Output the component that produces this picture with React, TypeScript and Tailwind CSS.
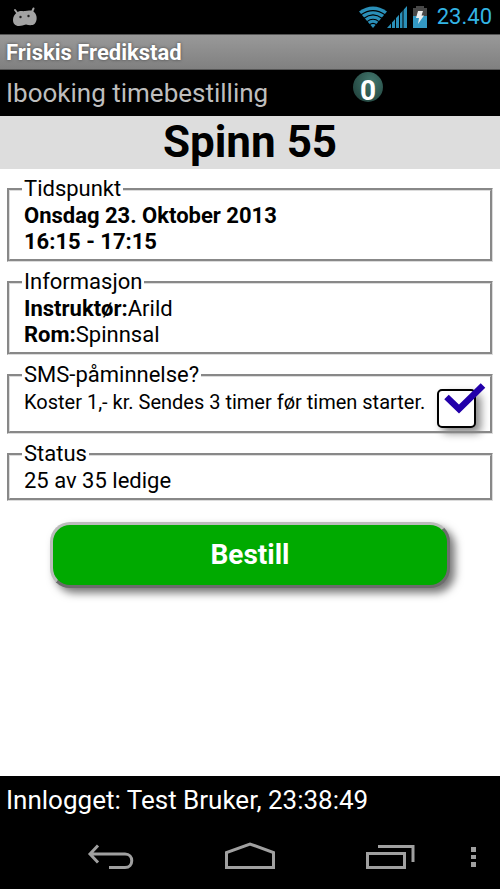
import { ReactNode } from "react";

type PanelProps = {
  title: string;
  children: ReactNode;
};

function Panel({ title, children }: PanelProps) {
  return (
    <fieldset className="min-w-0 border-[3px] border-[#dcdcdc] [border-style:groove] px-3 pt-px pb-1">
      <legend className="px-0.5">{title}</legend>
      <div className="px-0.5">{children}</div>
    </fieldset>
  );
}

function StatusBar() {
  return (
    <div className="flex h-[34px] items-center bg-black px-2">
      <svg className="ml-1 h-5 w-7" viewBox="0 0 28 20" aria-hidden="true">
        <path d="M3 3l3 4M21.500 1.500L19.500 6" stroke="#a3a3a3" strokeWidth="2" strokeLinecap="round" />
        <path
          d="M5 5.500C8 3.200 10 4.500 13 4C16 3.300 20 3 22 5C25.500 8 25.500 14 22.500 17C21 18.500 17 18.500 14 17.500C11 18 10 19 7 19C3 19 1 16.500 1 13C1 10 2.500 7 5 5.500Z"
          fill="#a3a3a3"
        />
        <circle cx="8.500" cy="10" r="1.200" fill="#222" />
        <circle cx="16.500" cy="9" r="1.200" fill="#222" />
      </svg>
      <div className="ml-auto flex items-center text-[#33b5e5]">
        <svg className="h-[22px] w-7" viewBox="0 0 28 22" aria-hidden="true">
          <path d="M0 5.500Q14 -4.500 28 5.500L14 22Z" fill="#2a8fb8" />
          <path d="M2 8.800Q14 .5 26 8.800M5 12.300Q14 5.500 23 12.300M8 15.600Q14 11 20 15.600M10.500 18.800Q14 16 17.500 18.800" fill="none" stroke="#000" strokeWidth="1.100" />
        </svg>
        <svg className="h-[22px] w-5" viewBox="0 0 20 22" aria-hidden="true">
          <path d="M0 22L20 0V22Z" fill="#2a8fb8" />
          <path d="M4.500 22V10M8.500 22V8M12.500 22V5M16 22V0" stroke="#000" strokeWidth="1" />
        </svg>
        <svg className="ml-1.5 h-[22px] w-[14px]" viewBox="0 0 14 22" aria-hidden="true">
          <path d="M3 0h8v2h3v9H0V2h3z" fill="#484848" />
          <path d="M0 10h14v12H0z" fill="#3399c4" />
          <path d="M5 5h5L8.500 9.500H11L5 18L6 12H3z" fill="#eee" />
        </svg>
        <span className="ml-2.5 text-[22px] leading-none">23.40</span>
      </div>
    </div>
  );
}

function NavBar() {
  return (
    <nav className="flex h-16 items-center bg-black text-[#a0a0a0]">
      <div className="flex flex-1 items-center justify-between pr-14 pl-[87px]">
        <button type="button" aria-label="Tilbake">
          <svg className="h-8 w-12" viewBox="0 0 48 32" fill="none" stroke="currentColor" strokeWidth="3">
            <path d="M11 4.500L3 13L11 21.500M3 13H38C47 13 47 26.500 38 26.500H22" />
          </svg>
        </button>
        <button type="button" aria-label="Hjem">
          <svg className="h-8 w-[52px]" viewBox="0 0 52 32" fill="none" stroke="currentColor" strokeWidth="3">
            <path d="M2.500 26.500V11.500L26 3L49.500 11.500V26.500Z" />
          </svg>
        </button>
        <button type="button" aria-label="Siste apper">
          <svg className="h-8 w-[50px]" viewBox="0 0 50 32" fill="none" stroke="currentColor" strokeWidth="3">
            <path d="M2.500 12.500H39.500V26.500H2.500ZM13 5.500H48V21" />
          </svg>
        </button>
      </div>
      <button type="button" aria-label="Meny" className="mr-6">
        <svg className="h-8 w-[5px]" viewBox="0 0 5 32" fill="currentColor">
          <path d="M0 6h5v5H0zM0 14h5v4H0zM0 21h5v5H0z" />
        </svg>
      </button>
    </nav>
  );
}

export default function App() {
  return (
    <div className="flex min-h-screen flex-col bg-white font-['Roboto',sans-serif] text-black">
      <StatusBar />
      <div className="flex h-9 items-center border-y border-[#555] bg-linear-to-b from-[#999] to-[#808080] px-1.5">
        <span className="text-[22px] font-bold text-white [text-shadow:0_0_3px_#444]">Friskis Fredikstad</span>
      </div>
      <header className="relative flex h-[46px] items-center bg-black px-1.5 text-[#bebebe]">
        <span className="text-[26px]">Ibooking timebestilling</span>
        <span className="absolute top-0.5 left-[353px] flex size-[30px] items-center justify-center rounded-full bg-radial-[at_60%_30%] from-[#42776d] to-[#1c3a35] pt-2 text-[28px] leading-none font-bold text-white">
          0
        </span>
      </header>

      <main className="flex-1 text-[22px] leading-[26px]">
        <h1 className="bg-[#ddd] text-center text-[44px] leading-[53px] font-bold">Spinn 55</h1>
        <form className="flex flex-col gap-[7px] p-[7px]" onSubmit={(e) => e.preventDefault()}>
          <Panel title="Tidspunkt">
            <p className="font-bold">Onsdag 23. Oktober 2013</p>
            <p className="font-bold">16:15 - 17:15</p>
          </Panel>
          <Panel title="Informasjon">
            <p>
              <b>Instruktør:</b>Arild
            </p>
            <p>
              <b>Rom:</b>Spinnsal
            </p>
          </Panel>
          <Panel title="SMS-påminnelse?">
            <div className="flex h-[38px] items-start justify-between">
              <label htmlFor="sms" className="text-[20px]">
                Koster 1,- kr. Sendes 3 timer før timen starter.
              </label>
              <span className="relative size-[39px] shrink-0">
                <input
                  id="sms"
                  type="checkbox"
                  defaultChecked
                  className="peer block size-[39px] appearance-none rounded-[5px] border-2 border-black bg-white shadow-[5px_5px_8px_#888]"
                />
                <svg
                  className="pointer-events-none absolute -top-1.5 left-1.5 hidden h-8 w-11 peer-checked:block"
                  viewBox="0 0 44 32"
                  fill="none"
                  stroke="#2200aa"
                  strokeWidth="6.500"
                >
                  <path d="M3.500 14L16 26L40 2.500" />
                </svg>
              </span>
            </div>
          </Panel>
          <Panel title="Status">
            <p>25 av 35 ledige</p>
          </Panel>
          <button
            type="submit"
            className="mx-[43px] mt-3.5 h-[66px] rounded-[20px] border-[3px] border-t-[#bbb] border-r-[#6c6c6c] border-b-[#6c6c6c] border-l-[#bbb] bg-[#00aa00] text-[28px] font-bold text-white shadow-[5px_5px_8px_#777]"
          >
            Bestill
          </button>
        </form>
      </main>

      <footer className="bg-black px-1.5 text-[26px] leading-[49px] text-white">Innlogget: Test Bruker, 23:38:49</footer>
      <NavBar />
    </div>
  );
}
